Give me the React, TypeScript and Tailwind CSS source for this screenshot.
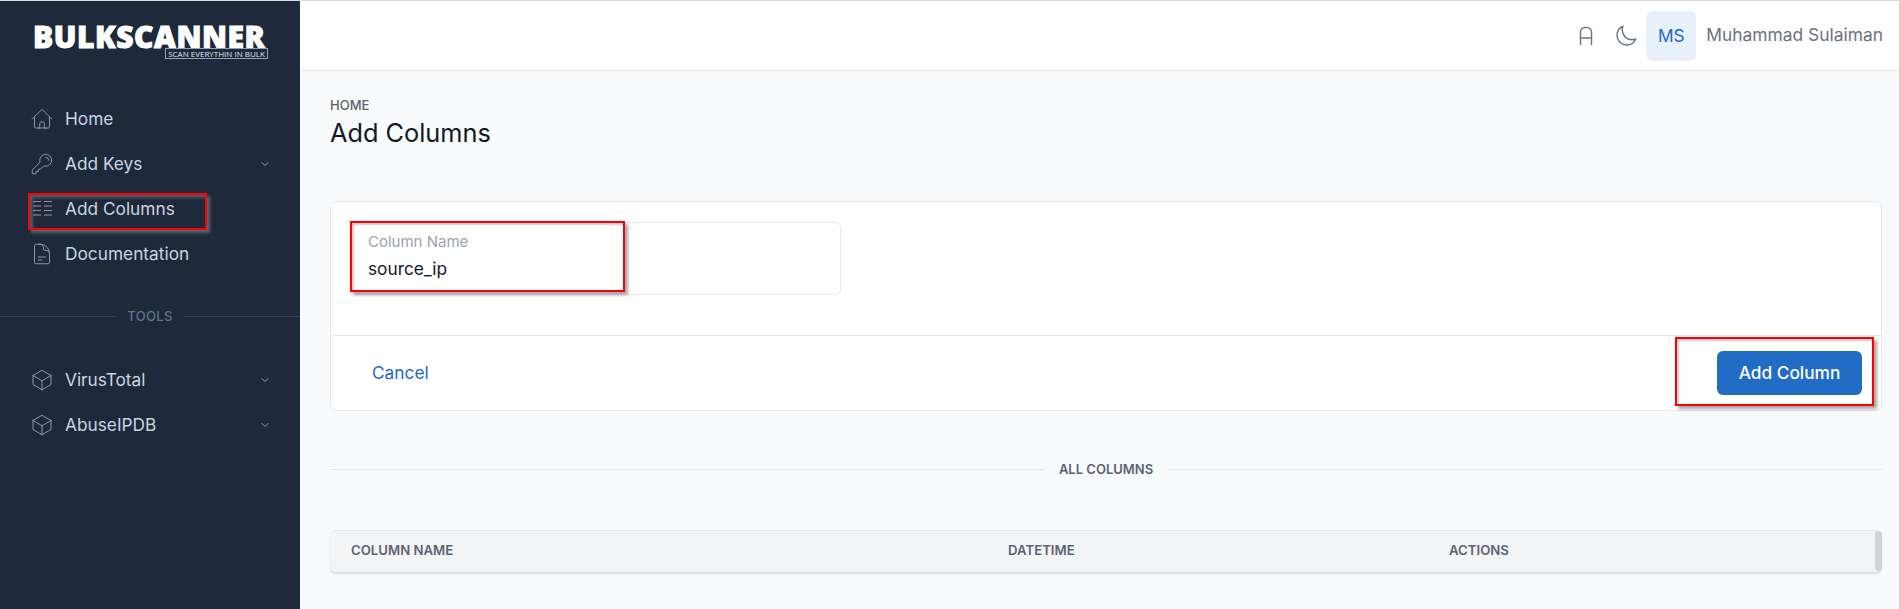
import { ChevronDown } from 'lucide-react'
import { HiOutlineHome, HiOutlineKey, HiOutlineDocumentText, HiOutlineCube, HiOutlineMoon } from 'react-icons/hi2'

const ColumnsIcon = () => (
  <svg width="24" height="24" viewBox="0 0 24 24" fill="none" stroke="currentColor" strokeWidth="1">
    <path d="M3 4.5h8M3 9h8M3 13.5h8M3 18h8M14 4.5h8M14 9h8M14 13.5h8M14 18h8" />
  </svg>
)

const FontIcon = () => (
  <svg width="14" height="20" viewBox="0 0 14 20" fill="none" stroke="currentColor" strokeWidth="1.4">
    <path d="M1.5 19V6a4.5 4.5 0 0 1 4.5-4.5h2A4.5 4.5 0 0 1 12.5 6v13M1.5 12h11" />
  </svg>
)

function NavItem({ icon, label, chevron }: { icon: React.ReactNode; label: string; chevron?: boolean }) {
  return (
    <div className="flex h-[45px] items-center pl-[30px] pr-[29px]">
      <span className="flex w-[35px] shrink-0 text-[#8d97a6]">{icon}</span>
      <span className="flex-1 text-[17.3px] text-[#cbd5e1]">{label}</span>
      {chevron && <ChevronDown size={12} className="text-[#94a3b8]" />}
    </div>
  )
}

export default function App() {
  return (
    <div className="relative flex h-[609px] overflow-hidden border-t border-[#dcdcdc] bg-[#f9fafb] font-['Inter',sans-serif]">
      <aside className="flex w-[300px] shrink-0 flex-col bg-[#1e293b]">
        <div className="ml-[33px] mt-[25px] flex h-[70px] w-[235px] flex-col">
          <div className="font-['Open_Sans',sans-serif] text-[30px] leading-[22px] font-extrabold tracking-[0.55px] whitespace-nowrap text-white [-webkit-text-stroke:1px_white]">BULKSCANNER</div>
          <div className="ml-auto flex h-[11px] w-[103px] items-center justify-center border border-[#94a3b8] font-['Open_Sans',sans-serif] text-[8px] leading-none whitespace-nowrap text-[#e2e8f0]">
            SCAN EVERYTHIN IN BULK
          </div>
        </div>
        <nav className="flex flex-col">
          <NavItem icon={<HiOutlineHome size={24} strokeWidth={1} />} label="Home" />
          <NavItem icon={<HiOutlineKey size={24} strokeWidth={1} />} label="Add Keys" chevron />
          <NavItem icon={<ColumnsIcon />} label="Add Columns" />
          <NavItem icon={<HiOutlineDocumentText size={24} strokeWidth={1} />} label="Documentation" />
        </nav>
        <div className="mt-[31px] flex items-center gap-[11px]">
          <div className="h-px flex-1 bg-[#334155]" />
          <span className="text-[13px] font-medium tracking-[0.3px] text-[#64748b]">TOOLS</span>
          <div className="h-px flex-1 bg-[#334155]" />
        </div>
        <nav className="mt-[31px] flex flex-col">
          <NavItem icon={<HiOutlineCube size={24} strokeWidth={1} />} label="VirusTotal" chevron />
          <NavItem icon={<HiOutlineCube size={24} strokeWidth={1} />} label="AbuseIPDB" chevron />
        </nav>
      </aside>

      <div className="flex min-w-0 flex-1 flex-col">
        <header className="flex h-[70px] items-center justify-end border-b border-[#e5e7eb] bg-white pr-[16px]">
          <span className="mr-[21px] text-[#6b7280]"><FontIcon /></span>
          <span className="mr-[8px] text-[#6b7280]"><HiOutlineMoon size={24} strokeWidth={1.4} /></span>
          <div className="flex h-[50px] w-[50px] items-center justify-center rounded-md bg-[#e8f0fa] text-[17.3px] text-[#2169c4]">MS</div>
          <span className="ml-[10px] text-[17.4px] text-[#6b7280]">Muhammad Sulaiman</span>
        </header>

        <main className="flex flex-col pl-[30px] pr-[17px]">
          <div className="mt-[26px] text-[13px] leading-4 font-medium text-[#5b6472]">HOME</div>
          <h1 className="mt-[4px] text-[25.3px] leading-8 text-[#111827]">Add Columns</h1>

          <section className="mt-[52px] flex h-[210px] flex-col rounded-md border border-[#e5e7eb] bg-white">
            <div className="h-[133px] pl-[20px] pt-[20px]">
              <div className="flex h-[73px] w-[490px] flex-col rounded-md border border-[#e5e7eb] px-[16px] pt-[9px]">
                <label className="text-[15px] leading-5 text-[#9ca3af]">Column Name</label>
                <span className="mt-[5px] text-[17.3px] leading-6 text-[#111827]">source_ip</span>
              </div>
            </div>
            <div className="flex flex-1 items-center justify-between border-t border-[#e5e7eb] pl-[41px] pr-[19px]">
              <span className="text-[17.3px] text-[#2169c4]">Cancel</span>
              <button className="flex h-[44px] w-[145px] items-center justify-center rounded-md bg-[#216cc4] text-[17.3px] font-medium text-white">Add Column</button>
            </div>
          </section>

          <div className="mt-[49px] flex items-center gap-[14px]">
            <div className="h-px flex-1 bg-[#e5e7eb]" />
            <span className="text-[13px] font-semibold text-[#5b6472]">ALL COLUMNS</span>
            <div className="h-px flex-1 bg-[#e5e7eb]" />
          </div>

          <div className="relative mt-[50px] grid h-[42px] grid-cols-[657px_441px_1fr] items-center rounded-md border-t border-[#e5e7eb] bg-[#f3f4f6] pl-[21px] text-[13.2px] font-semibold text-[#5b6472] shadow-[0_2px_2px_rgba(0,0,0,0.12)]">
            <span>COLUMN NAME</span>
            <span>DATETIME</span>
            <span>ACTIONS</span>
            <div className="absolute right-0 top-0 h-[40px] w-[7px] rounded-sm bg-[#d1d5db]" />
          </div>
        </main>
      </div>

      {/* annotation boxes drawn over the screenshot */}
      <div className="absolute left-[28px] top-[192px] h-[37px] w-[179px] border-2 border-[#ff0000] shadow-[3px_3px_3px_rgba(160,160,160,0.5),inset_3px_3px_3px_rgba(160,160,160,0.4)]" />
      <div className="absolute left-[350px] top-[220px] h-[71px] w-[275px] border-2 border-[#ff0000] shadow-[3px_3px_3px_rgba(0,0,0,0.35),inset_2px_2px_2px_rgba(0,0,0,0.2)]" />
      <div className="absolute left-[1675px] top-[336px] h-[69px] w-[199px] border-2 border-[#ff0000] shadow-[3px_3px_3px_rgba(0,0,0,0.35),inset_2px_2px_2px_rgba(0,0,0,0.2)]" />
    </div>
  )
}
